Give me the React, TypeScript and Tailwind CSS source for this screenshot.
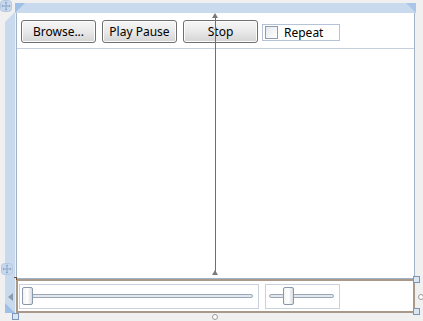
import React from "react";

function Button({ label }: { label: string }) {
  return (
    <div className="w-[75px] h-[23px] rounded-[3px] border border-[#707070] bg-gradient-to-b from-[#f6f6f6] via-[#e9e9e9] to-[#d4d4d4] flex items-center justify-center text-[12px] text-black shadow-[inset_0_0_0_1px_#fcfcfc]">
      {label}
    </div>
  );
}

function Slider({ width, thumbAt }: { width: string; thumbAt: string }) {
  return (
    <div className={`relative ${width} h-[25px] border border-[#c9d2dc] flex items-center pl-[3px] pr-[5px]`}>
      <div className="flex-1 h-[4px] rounded-full border border-[#9aa7b8] bg-[#e4e8ee]" />
      <div
        className={`absolute ${thumbAt} top-[2px] w-[11px] h-[18px] rounded-[2px] border border-[#8a97a8] bg-gradient-to-r from-[#f4f4f4] via-[#ffffff] to-[#d8dce2]`}
      />
    </div>
  );
}

function Move({ className }: { className: string }) {
  return (
    <svg className={`absolute ${className}`} width="12" height="12" viewBox="0 0 12 12">
      <rect x="0.5" y="0.5" width="11" height="11" rx="3" fill="#c8d9ee" stroke="#b4c8e2" />
      <path d="M6 2v8M2 6h8" stroke="#8aa6c8" strokeWidth="1" />
      <path d="M6 1.5l-1.5 1.5h3zM6 10.5l-1.5-1.5h3zM1.5 6l1.5-1.5v3zM10.5 6l-1.5-1.5v3z" fill="#8aa6c8" />
    </svg>
  );
}

function Handle({ className }: { className: string }) {
  return <div className={`absolute ${className} w-[7px] h-[7px] border border-[#7b96b8] bg-[#dbe6f3]`} />;
}

export default function App() {
  return (
    <div
      className="relative w-[423px] h-[321px] bg-[#f0f0f0] overflow-hidden flex pl-[5px] pt-[3px]"
      style={{ fontFamily: "'Noto Sans', 'DejaVu Sans', sans-serif" }}
    >
      {/* left ruler */}
      <div className="w-[10px] mt-[9px] h-[301px] bg-[#c9daef] relative">
        <div className="absolute left-0 top-0 w-0 h-0 border-t-[10px] border-t-[#f0f0f0] border-r-[10px] border-r-transparent" />
        <div className="absolute left-0 bottom-0 w-0 h-0 border-b-[10px] border-b-[#9fc0e6] border-r-[10px] border-r-transparent" />
        <div className="absolute left-[3px] top-[281px] w-0 h-0 border-y-[4px] border-y-transparent border-r-[5px] border-r-[#8c99a8]" />
      </div>

      <div className="w-[401px] flex flex-col">
        {/* top ruler */}
        <div className="h-[10px] bg-[#c9daef] relative">
          <div className="absolute left-0 top-0 w-0 h-0 border-l-[10px] border-l-[#9fc0e6] border-b-[10px] border-b-transparent" />
          <div className="absolute right-0 top-0 w-0 h-0 border-r-[10px] border-r-[#a9c6e8] border-b-[10px] border-b-transparent" />
        </div>

        {/* design surface */}
        <div className="ml-[1px] w-[399px] h-[266px] bg-white border border-t-0 border-[#a3b3c7] flex flex-col relative">
          <div className="h-[36px] border-b border-[#c3cfdc] flex items-start pl-[4px] pt-[7px] gap-[6px]">
            <Button label="Browse..." />
            <Button label="Play Pause" />
            <Button label="Stop" />
            <div className="ml-[-2px] mt-[4px] w-[78px] h-[17px] border border-[#b4c4d6] flex items-center gap-[6px] pl-[2px]">
              <div className="w-[13px] h-[13px] border border-[#8e9cae] bg-gradient-to-br from-[#e6e9ee] to-[#ffffff]" />
              <span className="text-[12px] text-black">Repeat</span>
            </div>
          </div>
          {/* vertical alignment adorner */}
          <div className="absolute left-[198px] top-[3px] w-[1px] h-[257px] bg-[#6f6f6f]" />
          <div className="absolute left-[195px] top-0 w-0 h-0 border-x-[3.5px] border-x-transparent border-b-[5px] border-b-[#7a7a7a]" />
          <div className="absolute left-[195px] top-[257px] w-0 h-0 border-x-[3.5px] border-x-transparent border-b-[5px] border-b-[#7a7a7a]" />
        </div>

        {/* bottom panel */}
        <div className="ml-[1px] w-[399px] h-[34px] border-2 border-[#a8998a] bg-white flex items-center pl-[1px] gap-[6px]">
          <Slider width="w-[240px]" thumbAt="left-[2px]" />
          <Slider width="w-[75px]" thumbAt="left-[17px]" />
        </div>
      </div>

      {/* designer adorners */}
      <Move className="left-0 top-0" />
      <Move className="left-[1px] top-[263px]" />
      <Handle className="left-[12px] top-[313px]" />
      <Handle className="left-[413px] top-[276px]" />
      <Handle className="left-[413px] top-[308px]" />
      <div className="absolute left-[418px] top-[294px] w-[6px] h-[6px] rounded-full border border-[#9a9a9a] bg-white" />
      <div className="absolute left-[212px] top-[314px] w-[6px] h-[6px] rounded-full border border-[#9a9a9a] bg-white" />
      <div className="absolute left-[14px] top-[277px] w-[3px] h-[3px] border-t border-r border-[#6b4a2a]" />
    </div>
  );
}
